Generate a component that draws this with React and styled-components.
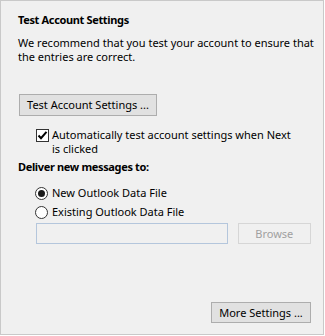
import React from 'react';
import styled, { createGlobalStyle } from 'styled-components';

const GlobalStyle = createGlobalStyle`
  body {
    margin: 0;
    background: #ffffff;
    font-family: "Noto Sans", "Liberation Sans", sans-serif;
    font-size: 11px;
    color: #000;
  }
`;

const Panel = styled.div`
  box-sizing: border-box;
  width: 324px;
  height: 335px;
  border: 1px solid #c9c9c9;
  background: #f0f0f0;
  padding: 11px 12px 11px 17px;
  display: flex;
  flex-direction: column;
  white-space: nowrap;
`;

const Title = styled.div`
  font-weight: bold;
  letter-spacing: -0.35px;
  line-height: 16px;
`;

const Text = styled.p`
  margin: ${(p) => p.$mt || 0}px 0 0;
  line-height: 14px;
  font-weight: ${(p) => (p.$bold ? 'bold' : 'normal')};
  letter-spacing: ${(p) => (p.$bold ? '-0.35px' : 'normal')};
`;

const Button = styled.button`
  box-sizing: border-box;
  font: inherit;
  color: ${(p) => (p.disabled ? '#a0a0a0' : '#000')};
  background: ${(p) => (p.disabled ? '#f0f0f0' : '#e1e1e1')};
  border: 1px solid ${(p) => (p.disabled ? '#d6d6d6' : '#adadad')};
  height: ${(p) => p.$h || 22}px;
  width: ${(p) => p.$w}px;
  padding: 0;
  line-height: 18px;
  margin: 0;
`;

const TestRow = styled.div`
  margin-top: 30px;
  padding-left: 1px;
`;

const CheckRow = styled.label`
  display: flex;
  align-items: flex-start;
  gap: 3px;
  margin-top: 12px;
  padding-left: 18px;
  line-height: 14px;
`;

const Box = styled.span`
  box-sizing: border-box;
  flex: none;
  width: 13px;
  height: 13px;
  margin-top: 1px;
  border: 1px solid #333;
  background: #fff;
  display: flex;
  align-items: center;
  justify-content: center;
`;

const RadioGroup = styled.div`
  display: flex;
  flex-direction: column;
  gap: 5px;
  margin-top: 12px;
  padding-left: 17px;
`;

const RadioRow = styled.label`
  display: flex;
  align-items: center;
  gap: 4px;
  line-height: 14px;
`;

const Circle = styled.span`
  box-sizing: border-box;
  flex: none;
  width: 13px;
  height: 13px;
  border-radius: 50%;
  border: 1px solid #333;
  background: #fff;
  display: flex;
  align-items: center;
  justify-content: center;
  &::after {
    content: '';
    display: ${(p) => (p.$on ? 'block' : 'none')};
    width: 7px;
    height: 7px;
    border-radius: 50%;
    background: #1a1a1a;
  }
`;

const FileRow = styled.div`
  display: flex;
  align-items: flex-start;
  gap: 10px;
  margin-top: 4px;
  padding-left: 18px;
`;

const Field = styled.div`
  box-sizing: border-box;
  width: 193px;
  height: 21px;
  border: 1px solid #b4c6dc;
  background: #f0f0f0;
`;

const Footer = styled.div`
  margin-top: auto;
  display: flex;
  justify-content: flex-end;
`;

export default function App() {
  return (
    <>
      <GlobalStyle />
      <Panel>
        <Title>Test Account Settings</Title>
        <Text $mt={8}>
          We recommend that you test your account to ensure that
          <br />
          the entries are correct.
        </Text>
        <TestRow>
          <Button $w={138}>Test Account Settings ...</Button>
        </TestRow>
        <CheckRow>
          <Box>
            <svg width="11" height="11" viewBox="0 0 11 11">
              <path d="M1.5 5.5 L4 8.2 L9.5 1.8" fill="none" stroke="#000" strokeWidth="2" />
            </svg>
          </Box>
          <span>
            Automatically test account settings when Next
            <br />
            is clicked
          </span>
        </CheckRow>
        <Text $mt={4} $bold>Deliver new messages to:</Text>
        <RadioGroup>
          <RadioRow>
            <Circle $on />
            New Outlook Data File
          </RadioRow>
          <RadioRow>
            <Circle />
            Existing Outlook Data File
          </RadioRow>
        </RadioGroup>
        <FileRow>
          <Field />
          <Button disabled $w={74} $h={21}>Browse</Button>
        </FileRow>
        <Footer>
          <Button $w={100} $h={21}>More Settings ...</Button>
        </Footer>
      </Panel>
    </>
  );
}
